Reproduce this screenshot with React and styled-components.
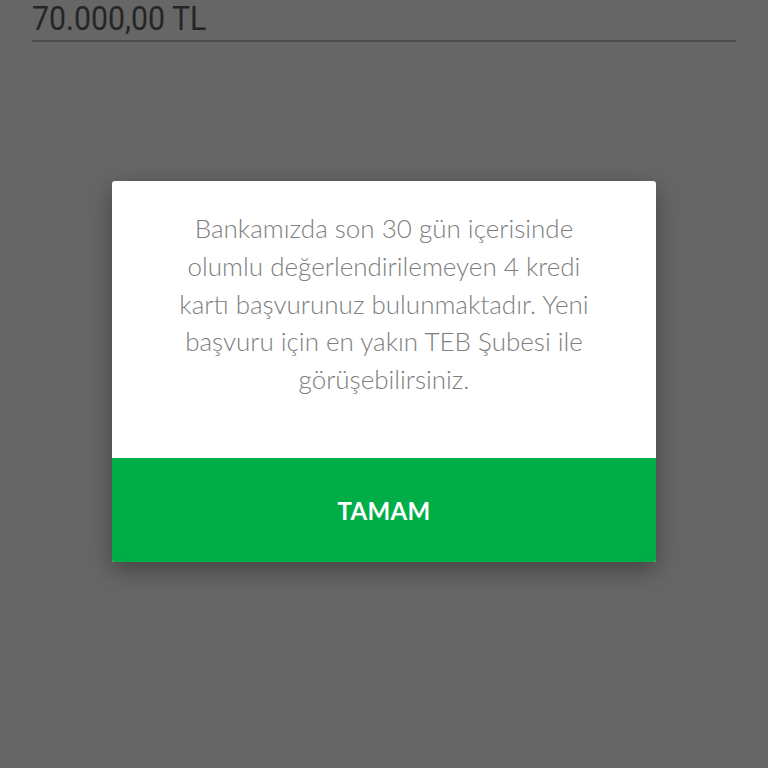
import React from "react";
import styled, { createGlobalStyle } from "styled-components";

const Global = createGlobalStyle`
  html, body { margin: 0; padding: 0; background: #666666; }
  body { width: 768px; height: 768px; overflow: hidden; font-family: Lato, "Noto Sans", sans-serif; }
`;

const Page = styled.div`
  width: 768px;
  height: 768px;
  display: flex;
  flex-direction: column;
  align-items: center;
  background: #666666;
`;

const Field = styled.div`
  width: 704px;
  height: 40px;
  border-bottom: 2px solid #4b4b4b;
  box-sizing: content-box;
`;

const Amount = styled.div`
  font-family: Roboto, "Liberation Sans", sans-serif;
  font-size: 34px;
  line-height: 34px;
  color: #252525;
  padding-top: 1px;
  transform: scaleX(0.89);
  transform-origin: left top;
  white-space: nowrap;
`;

const Dialog = styled.div`
  margin-top: 139px;
  width: 544px;
  background: #ffffff;
  border-radius: 3px;
  overflow: hidden;
  box-shadow: 0 8px 24px rgba(0, 0, 0, 0.35);
  display: flex;
  flex-direction: column;
`;

const Message = styled.p`
  margin: 0;
  height: 277px;
  box-sizing: border-box;
  padding: 29px 56px 0;
  text-align: center;
  font-family: Lato, "Noto Sans", sans-serif;
  font-weight: 300;
  font-size: 26px;
  line-height: 37.8px;
  color: #7e7e7e;
`;

const Button = styled.button`
  height: 104px;
  border: none;
  background: #00ae47;
  color: #ffffff;
  font-family: Lato, "Noto Sans", sans-serif;
  font-weight: 700;
  font-size: 24px;
  letter-spacing: 0.3px;
  padding: 0;
  cursor: pointer;
`;

export default function App() {
  return (
    <>
      <Global />
      <Page>
        <Field>
          <Amount>70.000,00 TL</Amount>
        </Field>
        <Dialog>
          <Message>
            Bankamızda son 30 gün içerisinde olumlu değerlendirilemeyen 4 kredi kartı başvurunuz bulunmaktadır. Yeni başvuru için en yakın TEB Şubesi ile görüşebilirsiniz.
          </Message>
          <Button>TAMAM</Button>
        </Dialog>
      </Page>
    </>
  );
}
